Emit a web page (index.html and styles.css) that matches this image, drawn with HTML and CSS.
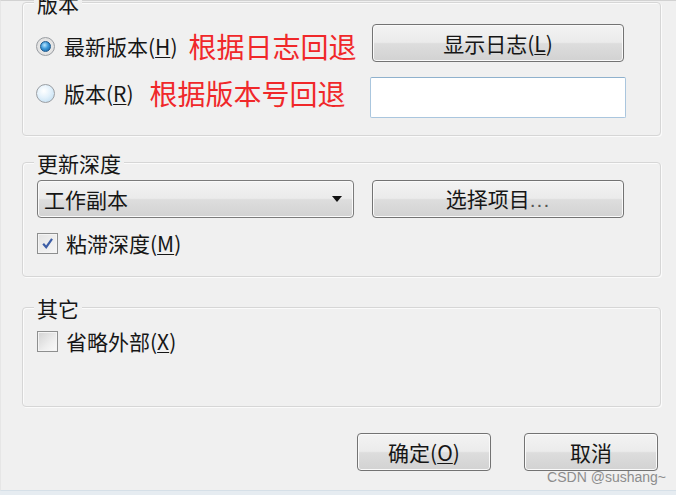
FILE: index.html
```html
<!DOCTYPE html>
<html lang="zh-CN">
<head>
<meta charset="utf-8">
<title>更新到版本</title>
<link rel="stylesheet" href="styles.css">
</head>
<body>
<div class="frame">
  <section class="group group-rev">
    <div class="group-title">版本</div>
    <div class="row row-head">
      <div class="choice choice-1">
        <span class="radio radio-on"></span>
        <span class="label">最新版本(<u>H</u>)</span>
        <span class="note note-1">根据日志回退</span>
      </div>
      <button class="btn">显示日志(<u>L</u>)</button>
    </div>
    <div class="row row-rev">
      <div class="choice choice-2">
        <span class="radio"></span>
        <span class="label">版本(<u>R</u>)</span>
        <span class="note note-2">根据版本号回退</span>
      </div>
      <div class="field"></div>
    </div>
  </section>

  <section class="group group-depth">
    <div class="group-title">更新深度</div>
    <div class="row row-depth">
      <div class="combo">
        <span class="combo-text">工作副本</span>
        <span class="combo-arrow"></span>
      </div>
      <button class="btn">选择项目<span class="dots">...</span></button>
    </div>
    <div class="check-row check-sticky">
      <span class="checkbox checkbox-on">
        <svg viewBox="0 0 12 12" width="13" height="13"><path d="M2 6.2 L4.8 9.4 L10.2 1.8" fill="none" stroke="#3d5ea6" stroke-width="2"/></svg>
      </span>
      <span class="label">粘滞深度(<u>M</u>)</span>
    </div>
  </section>

  <section class="group group-other">
    <div class="group-title">其它</div>
    <div class="check-row check-ext">
      <span class="checkbox"></span>
      <span class="label">省略外部(<u>X</u>)</span>
    </div>
  </section>

  <div class="actions">
    <button class="btn btn-dlg">确定(<u>O</u>)</button>
    <button class="btn btn-dlg">取消</button>
  </div>

  <div class="watermark">CSDN @sushang~</div>
</div>
</body>
</html>
```

FILE: styles.css
```css
html {
  background: #e6ecf1;
}
body {
  margin: 0;
  font-family: "Noto Sans CJK SC", "Noto Sans", sans-serif;
  color: #161616;
}
.frame {
  position: relative;
  height: 491px;
  box-sizing: border-box;
  background: #f0f0f0;
  border-top: 1px solid #d2d2d2;
  border-bottom: 1px solid #d6e0e8;
  border-left: 1px solid #e6e6e6;
  padding: 1px 15px 0 21px;
}
.group {
  border: 1px solid #d6d6d6;
  border-radius: 4px;
  box-shadow: inset 1px 1px 0 #fbfbfb, 1px 1px 0 #fbfbfb;
  padding: 0 36px 0 14px;
}
.group-title {
  width: fit-content;
  margin: -12px 0 0 -3px;
  padding: 0 3px;
  background: #f0f0f0;
  font-size: 21px;
  line-height: 24px;
}
.group-rev {
  padding-bottom: 17px;
}
.group-depth {
  margin-top: 26px;
  padding-bottom: 21px;
}
.group-other {
  margin-top: 30px;
  padding-bottom: 53px;
}
.row {
  display: grid;
  grid-template-columns: minmax(0, 1fr) 252px;
  column-gap: 18px;
}
.row-head {
  margin-top: 9px;
  height: 38px;
}
.row-rev {
  margin-top: 15px;
  height: 41px;
}
.row-depth {
  margin-top: 5px;
  height: 38px;
}
.choice {
  align-self: start;
  height: 32px;
  display: flex;
  align-items: center;
  white-space: nowrap;
}
.choice-1 {
  margin-top: 6px;
}
.label {
  font-size: 21px;
  line-height: 1;
}
.label u {
  text-decoration-thickness: 1px;
  text-underline-offset: 2px;
}
.note {
  color: #f0282a;
  font-size: 28px;
  line-height: 1;
}
.note-1 {
  margin-left: 11px;
}
.note-2 {
  margin-left: 16px;
}
.radio {
  flex: none;
  width: 19px;
  height: 19px;
  margin-left: -1px;
  margin-right: 9px;
  border-radius: 50%;
  border: 1px solid #9a9ea3;
  box-sizing: border-box;
  background: radial-gradient(circle at 40% 35%, #ffffff 0%, #e3f1fb 45%, #b8d9ef 100%);
  position: relative;
}
.radio-on {
  background: radial-gradient(circle at 50% 50%, #f4f4f4 0%, #d8d8d8 100%);
}
.radio-on::after {
  content: "";
  position: absolute;
  left: 3px;
  top: 3px;
  width: 11px;
  height: 11px;
  border-radius: 50%;
  box-sizing: border-box;
  border: 1px solid #1d5a8d;
  background: radial-gradient(circle at 40% 35%, #b9e6ff 0%, #3d9ad9 45%, #14599a 100%);
}
.btn {
  font-family: inherit;
  font-size: 21px;
  line-height: 1;
  color: #161616;
  height: 38px;
  padding: 0;
  border: 1px solid #737373;
  border-radius: 4px;
  box-shadow: inset 0 0 0 1px #fafafa;
  background: linear-gradient(#f3f3f3 0%, #ebebeb 48%, #dddddd 52%, #d2d2d2 100%);
}
.btn u {
  text-decoration-thickness: 1px;
  text-underline-offset: 2px;
}
.dots {
  font-family: "Liberation Sans", sans-serif;
  color: #555;
  letter-spacing: 1px;
}
.field {
  margin: 0 -2px;
  height: 41px;
  box-sizing: border-box;
  background: #ffffff;
  border: 1px solid #aac6de;
  border-top-color: #8fb1cd;
  border-radius: 2px;
}
.combo {
  height: 38px;
  box-sizing: border-box;
  display: flex;
  align-items: center;
  justify-content: space-between;
  padding: 0 11px 0 6px;
  border: 1px solid #7b7b7b;
  border-radius: 4px;
  box-shadow: inset 0 0 0 1px #fafafa;
  background: linear-gradient(#f3f3f3 0%, #ebebeb 48%, #dddddd 52%, #d2d2d2 100%);
}
.combo-text {
  font-size: 21px;
  line-height: 1;
}
.combo-arrow {
  width: 0;
  height: 0;
  border-left: 5px solid transparent;
  border-right: 5px solid transparent;
  border-top: 6px solid #111;
}
.check-row {
  display: flex;
  align-items: center;
  height: 24px;
}
.check-sticky {
  margin-top: 13px;
}
.check-ext {
  margin-top: 9px;
}
.checkbox {
  flex: none;
  width: 21px;
  height: 21px;
  margin-right: 8px;
  box-sizing: border-box;
  border: 1px solid #8e8f8f;
  box-shadow: inset 0 0 0 1px #f4f4f4;
  background: linear-gradient(135deg, #d2d2d2 0%, #eeeeee 60%, #fafafa 100%);
  display: flex;
  align-items: center;
  justify-content: center;
}
.checkbox-on {
  background: linear-gradient(135deg, #e4e4e4 0%, #f6f6f6 100%);
}
.actions {
  margin-top: 26px;
  display: flex;
  justify-content: flex-end;
  gap: 33px;
  padding-right: 3px;
}
.btn-dlg {
  width: 134px;
}
.watermark {
  position: absolute;
  right: 10px;
  top: 468px;
  font-family: "Liberation Sans", sans-serif;
  font-size: 14px;
  color: #8d8d8d;
}
```
